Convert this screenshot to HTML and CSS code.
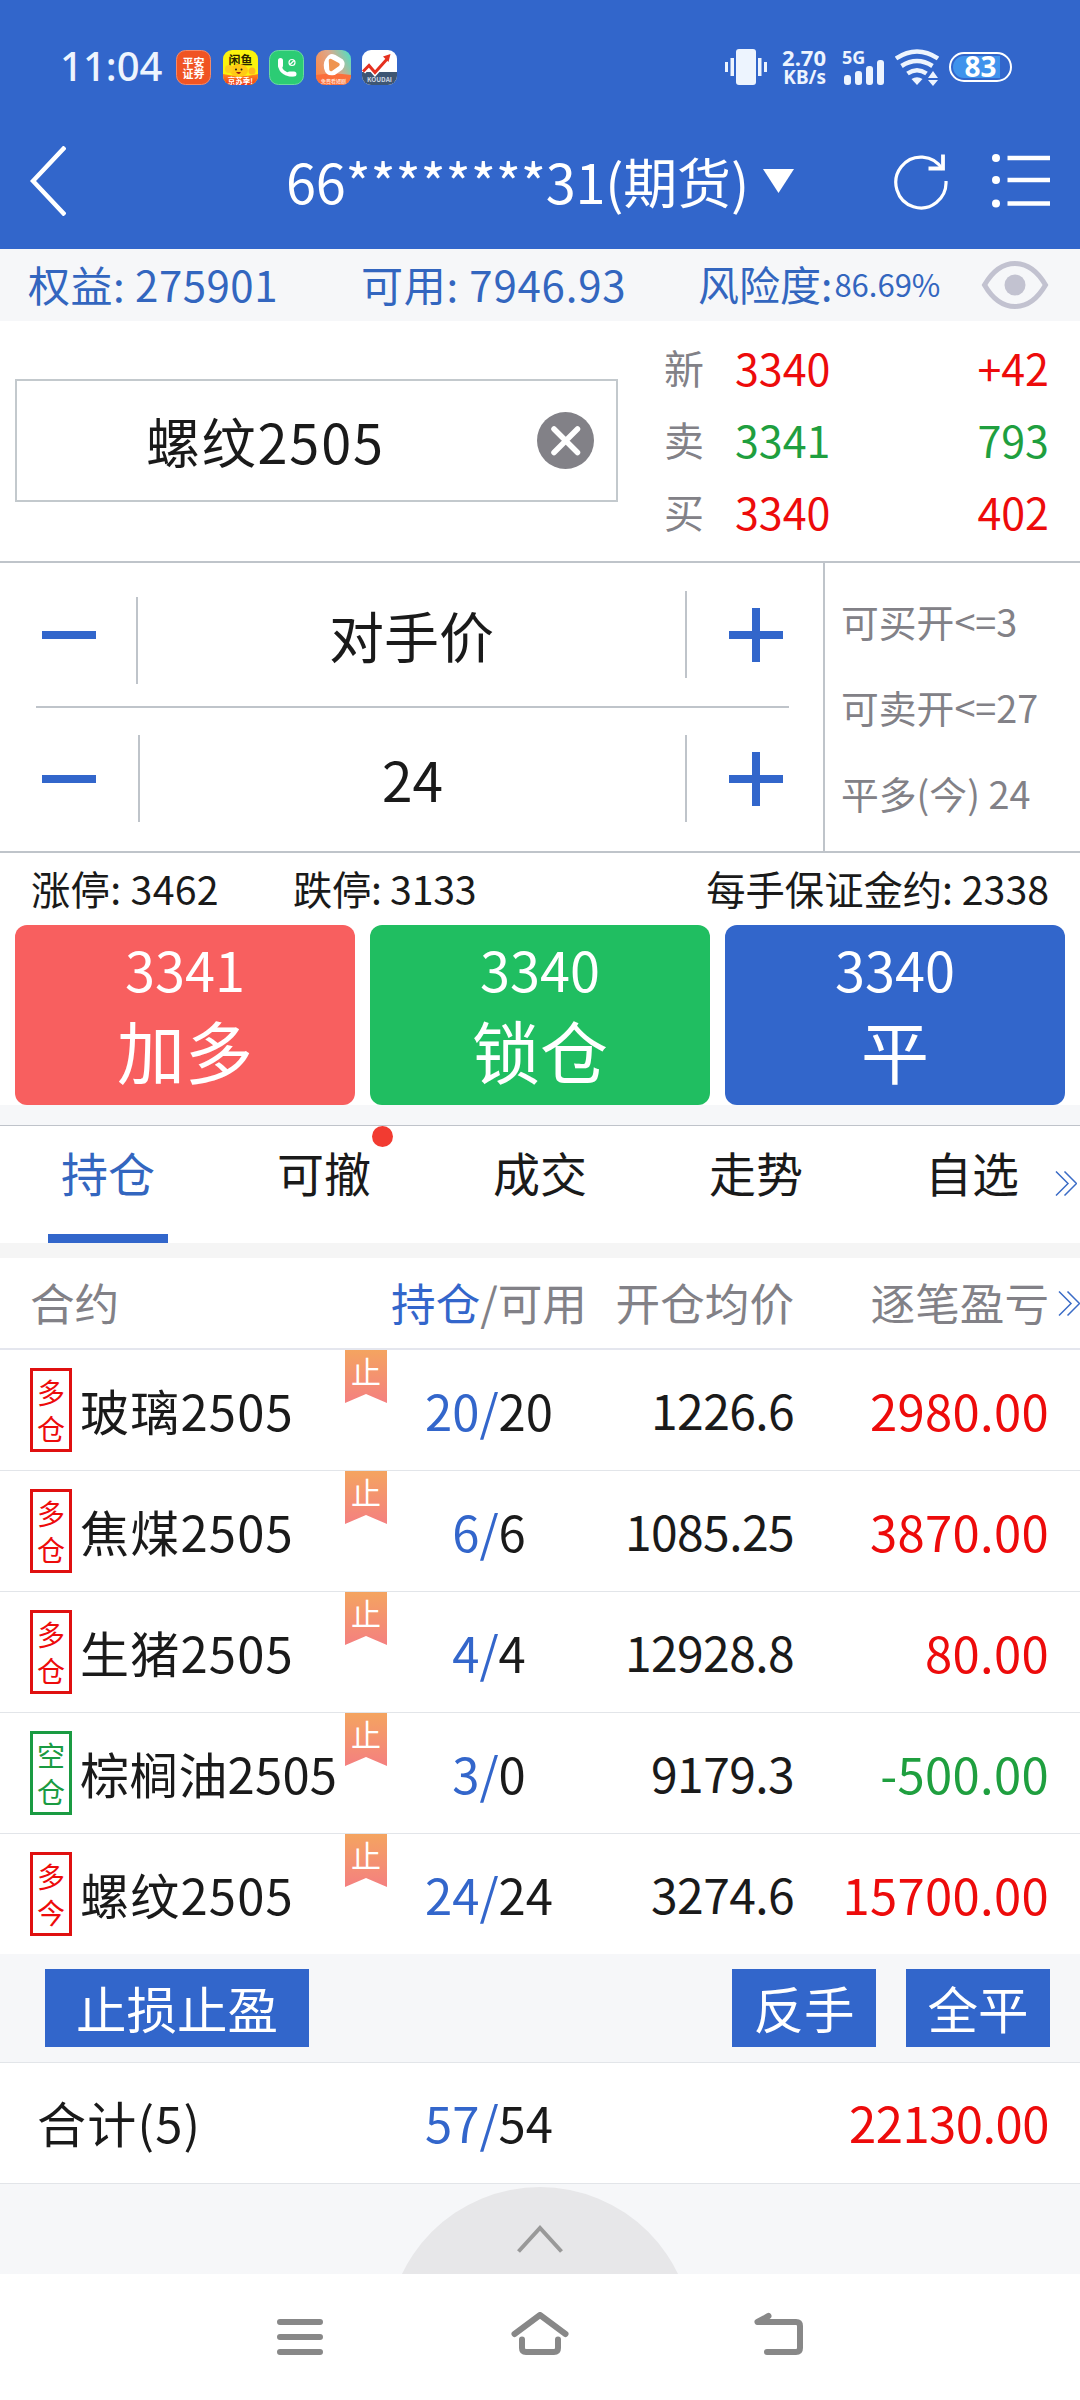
FILE: index.html
```html
<!DOCTYPE html>
<html lang="zh-CN">

<head>
  <meta charset="UTF-8">
  <meta name="viewport" content="width=device-width, initial-scale=1.0">
  <title>期货交易</title>
  <link rel="stylesheet" href="styles.css">
</head>

<body>

  <header class="header">
    <!-- Status bar -->
    <div class="status-bar">
      <span class="time">11:04</span>
      <div class="app-icons">
        <svg width="35" height="35" viewBox="0 0 35 35">
          <rect x=".5" y=".5" width="34" height="34" rx="9" fill="#f05423" stroke="#f48a69" />
          <text x="17.5" y="16.5" class="ico-text" font-size="11">平安</text>
          <text x="17.5" y="27.5" class="ico-text" font-size="11">证券</text>
        </svg>
        <svg width="35" height="35" viewBox="0 0 35 35">
          <defs>
            <clipPath id="round"><rect width="35" height="35" rx="9" /></clipPath>
            <linearGradient id="sale" x1="0" y1="0" x2="0" y2="1">
              <stop offset="0" stop-color="#ff8a1c" />
              <stop offset="1" stop-color="#f0361c" />
            </linearGradient>
          </defs>
          <g clip-path="url(#round)">
            <rect width="35" height="35" fill="#fbf30d" />
            <text x="17.5" y="15" class="ico-text" font-size="12" style="fill:#2a2400">闲鱼</text>
            <path d="M0 24q17 4 35 0v11h-35z" fill="url(#sale)" />
            <ellipse cx="16" cy="20.500" rx="9" ry="6.500" fill="#ffc914" />
            <circle cx="6" cy="19" r="4" fill="#ffcf1d" />
            <circle cx="29" cy="21" r="3.500" fill="#ffb81d" />
            <circle cx="13" cy="19.500" r="1" fill="#222" />
            <circle cx="18.500" cy="19.500" r="1" fill="#222" />
            <path d="M13 22q3 4 5 0z" fill="#9c1f10" />
            <text x="17.500" y="33.500" class="ico-text" font-size="7.500">京苏季!</text>
          </g>
        </svg>
        <svg width="35" height="35" viewBox="0 0 35 35">
          <rect x=".5" y=".5" width="34" height="34" rx="9" fill="#2ccc74" stroke="#6adb9f" />
          <path d="M11 12.500c-1 7.500 4 12.500 13 12" fill="none" stroke="#fff" stroke-width="3.600" stroke-linecap="round" />
          <path d="M11.500 10.500v5M20.500 24h4.500" stroke="#fff" stroke-width="5" stroke-linecap="round" />
          <circle cx="23" cy="12.500" r="3" fill="none" stroke="#fff" stroke-width="1.200" />
          <path d="M21 14.500l4-4" stroke="#fff" stroke-width="1.200" />
        </svg>
        <svg width="35" height="35" viewBox="0 0 35 35">
          <defs>
            <linearGradient id="video" x1="0" y1=".6" x2="1" y2=".1">
              <stop offset="0" stop-color="#f98a4d" />
              <stop offset=".5" stop-color="#dda88a" />
              <stop offset="1" stop-color="#4fe0c4" />
            </linearGradient>
          </defs>
          <rect width="35" height="35" rx="9" fill="url(#video)" />
          <path d="M0 25q17-3 35 0v1a9 9 0 0 1-9 9H9a9 9 0 0 1-9-9z" fill="#fb6f3b" />
          <path d="M12.500 8.500Q14.500 5 18 6.500L25.500 11Q28 14 25 18L18 23Q11.500 24.500 10 18Q9 12 12.500 8.500z" fill="#fff" stroke="#fff" stroke-width="4" stroke-linejoin="round" />
          <path d="M14.500 10.500l7.500 4-7 5z" fill="#ef9450" stroke="#ef9450" stroke-width="3.500" stroke-linejoin="round" />
          <text x="17.500" y="33" class="ico-text" font-size="5" style="fill:#ffd9c4">免费看短剧</text>
        </svg>
        <svg width="35" height="35" viewBox="0 0 35 35">
          <rect width="35" height="35" rx="9" fill="#fff" />
          <path d="M0 22h35v4a9 9 0 0 1-9 9H9a9 9 0 0 1-9-9z" fill="#3e5673" />
          <path d="M1 21.500l6-6 6 7L26 8" fill="none" stroke="#fff" stroke-width="6" />
          <path d="M1 21.500l6-6 6 7L26 8" fill="none" stroke="#e5301f" stroke-width="3" />
          <path d="M21 6.500l7.500-2.500-2 8z" fill="#e5301f" />
          <text x="17.500" y="31.500" class="ico-text" font-size="6.500" style="fill:#cfd8e4">KOUDAI</text>
        </svg>
      </div>

      <div class="status-right">
        <svg class="vibrate" width="42" height="36" viewBox="0 0 42 36" fill="#edf4fe">
          <rect x="11" y="0" width="20" height="36" rx="3" />
          <rect x="5.500" y="9" width="3.500" height="18" />
          <rect x="33" y="9" width="3.500" height="18" />
          <rect x="0" y="13" width="3" height="10" />
          <rect x="39" y="13" width="3" height="10" />
        </svg>
        <div class="speed">
          <div>2.70</div>
          <div class="unit">KB/s</div>
        </div>
        <svg class="signal" width="43" height="37" viewBox="0 0 43 37" fill="#edf4fe">
          <text x="0" y="14.500" class="net">5G</text>
          <rect x="2" y="26" width="7" height="10" rx="3" />
          <rect x="13" y="22" width="7" height="14" rx="3" />
          <rect x="24" y="17" width="7" height="19" rx="3" />
          <rect x="35" y="11" width="7" height="25" rx="3" />
        </svg>
        <svg class="wifi" width="44" height="37" viewBox="0 0 44 37" fill="none" stroke="#edf4fe" stroke-width="4.500">
          <path d="M1 9.500q21-14 42 0" />
          <path d="M6.500 17q15.500-10 31 0" />
          <path d="M12.500 24.500q9.500-6.500 19 0" />
          <path d="M16.500 30q5.500-3.500 11 0l-5.500 6z" fill="#edf4fe" stroke="none" />
          <path d="M33 29l5-7 5 7zM33 31l5 6 5-6z" fill="#edf4fe" stroke="none" />
        </svg>
        <div class="battery"><span class="battery-level"></span><b>83</b></div>
      </div>
    </div>

    <!-- Account title -->
    <div class="title-bar">
      <svg class="back" width="36" height="70" viewBox="0 0 36 70" fill="none" stroke="#fff" stroke-width="4.500">
        <path d="M35 1L3 35l32 34" />
      </svg>
      <div class="title">66********31(期货)</div>
      <svg class="caret" width="31" height="24" viewBox="0 0 31 24" fill="#fff">
        <path d="M0 0h31L15.500 24z" />
      </svg>
      <svg class="refresh" width="56" height="60" viewBox="0 0 56 60" fill="none" stroke="#fff" stroke-width="3.200">
        <path d="M48.500 18.500A25.100 25.400 0 1 0 52 30" />
        <path d="M49 3.500v14H34.500" stroke-width="3.800" />
      </svg>
      <svg class="list" width="58" height="54" viewBox="0 0 58 54" fill="#fff">
        <circle cx="4" cy="4" r="4" />
        <circle cx="4" cy="26" r="4" />
        <circle cx="4" cy="49.500" r="4" />
        <path d="M15.500 4H58M15.500 26H58M15.500 49.500H58" stroke="#fff" stroke-width="4.500" />
      </svg>
    </div>
  </header>

  <section class="account">
    <span class="equity">权益: 275901</span>
    <span class="available">可用: 7946.93</span>
    <span class="risk">风险度:</span>
    <span class="risk-value">86.69%</span>
    <svg class="eye" width="68" height="50" viewBox="0 0 68 50" fill="none" stroke="#c2c2d0" stroke-width="5">
      <path d="M3.500 25Q16 3.500 34 3.500T64.500 25Q52 46.500 34 46.500T3.500 25z" />
      <circle cx="34" cy="25" r="10.500" fill="#c2c2d0" stroke="none" />
    </svg>
  </section>

  <!-- Contract and quotes -->
  <section class="quote">
    <div class="contract-box">
      <span class="contract-name">螺纹2505</span>
      <svg class="clear" width="57" height="57" viewBox="0 0 57 57">
        <circle cx="28.500" cy="28.500" r="28.500" fill="#828187" />
        <path d="M17 17l23.500 23.500M40.500 17L17 40.500" stroke="#fff" stroke-width="5.500" stroke-linecap="round" />
      </svg>
    </div>
    <div class="prices">
      <div class="price-row"><span class="label">新</span><span class="red">3340</span><span class="vol red">+42</span></div>
      <div class="price-row"><span class="label">卖</span><span class="green">3341</span><span class="vol green">793</span></div>
      <div class="price-row"><span class="label">买</span><span class="red">3340</span><span class="vol red">402</span></div>
    </div>
  </section>

  <!-- Price and volume -->
  <section class="order">
    <div class="steppers">
      <div class="stepper first">
        <span class="minus"></span>
        <span class="value">对手价</span>
        <span class="plus"></span>
      </div>
      <div class="stepper">
        <span class="minus"></span>
        <span class="value">24</span>
        <span class="plus"></span>
      </div>
    </div>
    <div class="order-info">
      <div>可买开&lt;=3</div>
      <div>可卖开&lt;=27</div>
      <div>平多(今) 24</div>
    </div>
  </section>

  <section class="limits">
    <span class="limit-up">涨停: 3462</span>
    <span class="limit-down">跌停: 3133</span>
    <span class="margin">每手保证金约: 2338</span>
  </section>

  <section class="trade-buttons">
    <div class="trade buy"><span class="trade-price">3341</span><span class="trade-label">加多</span></div>
    <div class="trade sell"><span class="trade-price">3340</span><span class="trade-label">锁仓</span></div>
    <div class="trade close"><span class="trade-price">3340</span><span class="trade-label">平</span></div>
  </section>

  <nav class="tabs">
    <div class="tab active">持仓</div>
    <div class="tab">可撤<span class="dot"></span></div>
    <div class="tab">成交</div>
    <div class="tab">走势</div>
    <div class="tab">自选</div>
    <svg class="more" width="22" height="25" viewBox="0 0 22 25" fill="none" stroke="#3b6cc6" stroke-width="1.500">
      <path d="M1 .5l12 12-12 12M9.500 .5l12 12-12 12" />
    </svg>
  </nav>

  <!-- Positions -->
  <section class="positions">
    <div class="row head">
      <span class="name">合约</span>
      <span class="qty"><i>持仓</i>/可用</span>
      <span class="avg">开仓均价</span>
      <span class="profit">逐笔盈亏</span>
      <svg class="more" width="22" height="25" viewBox="0 0 22 25" fill="none" stroke="#3b6cc6" stroke-width="1.500">
        <path d="M1 .5l12 12-12 12M9.500 .5l12 12-12 12" />
      </svg>
    </div>
    <div class="row">
      <span class="name"><span class="badge">多<br>仓</span>玻璃2505</span><span class="stop">止</span>
      <span class="qty"><i>20/</i>20</span>
      <span class="avg">1226.6</span>
      <span class="profit red">2980.00</span>
    </div>
    <div class="row">
      <span class="name"><span class="badge">多<br>仓</span>焦煤2505</span><span class="stop">止</span>
      <span class="qty"><i>6/</i>6</span>
      <span class="avg">1085.25</span>
      <span class="profit red">3870.00</span>
    </div>
    <div class="row">
      <span class="name"><span class="badge">多<br>仓</span>生猪2505</span><span class="stop">止</span>
      <span class="qty"><i>4/</i>4</span>
      <span class="avg">12928.8</span>
      <span class="profit red">80.00</span>
    </div>
    <div class="row">
      <span class="name long"><span class="badge short">空<br>仓</span>棕榈油2505</span><span class="stop">止</span>
      <span class="qty"><i>3/</i>0</span>
      <span class="avg">9179.3</span>
      <span class="profit green">-500.00</span>
    </div>
    <div class="row">
      <span class="name"><span class="badge">多<br>今</span>螺纹2505</span><span class="stop">止</span>
      <span class="qty"><i>24/</i>24</span>
      <span class="avg">3274.6</span>
      <span class="profit red">15700.00</span>
    </div>
  </section>

  <section class="actions">
    <span class="btn wide">止损止盈</span>
    <span class="btn">反手</span>
    <span class="btn">全平</span>
  </section>

  <section class="row total">
    <span class="name">合计(5)</span>
    <span class="qty"><i>57/</i>54</span>
    <span class="avg"></span>
    <span class="profit red">22130.00</span>
  </section>

  <section class="drawer">
    <div class="drawer-handle">
      <svg width="46" height="28" viewBox="0 0 46 28" fill="none" stroke="#999" stroke-width="4">
        <path d="M1.500 26.500L23 3l21.500 23.500" />
      </svg>
    </div>
  </section>

  <!-- System navigation -->
  <footer class="system-nav">
    <svg width="60" height="44" viewBox="0 0 60 44">
      <path d="M10 10h40M10 25h40M10 40h40" />
    </svg>
    <svg width="60" height="44" viewBox="0 0 60 44">
      <path d="M4.500 22L30 3l25.500 19" />
      <path d="M12 27.500v8.500q0 4 4 4h28q4 0 4-4v-8.500" />
    </svg>
    <svg width="60" height="44" viewBox="0 0 60 44">
      <path d="M18.500 4L7.500 10H46q4 0 4 4v22q0 4-4 4H17" />
    </svg>
  </footer>

</body>

</html>
```
FILE: styles.css
```css
* {
  box-sizing: border-box;
}

body {
  margin: 0;
  width: 1080px;
  height: 2400px;
  overflow: hidden;
  background-color: #fff;
  color: #1a1a1a;
  font-family: "Noto Sans CJK SC", sans-serif;
  line-height: 1;
  white-space: nowrap;
}

svg {
  display: block;
  flex-shrink: 0;
}

i {
  font-style: normal;
  color: #3366cb;
}

.red {
  color: #ed0b0b;
}

.green {
  color: #1f9f3f;
}

/* Header */
.header {
  height: 249px;
  background-color: #3266cb;
  color: #fff;
}

.status-bar {
  display: flex;
  align-items: center;
  height: 112px;
  padding: 22px 68px 0 60px;
}

.time {
  width: 116px;
  padding-bottom: 3px;
  font-family: "Noto Sans", sans-serif;
  font-size: 40px;
  font-weight: 500;
  color: #edf4fe;
  line-height: 36px;
}

.app-icons {
  display: flex;
  gap: 11.6px;
}

.ico-text {
  fill: #fff;
  font-weight: bold;
  text-anchor: middle;
}

.status-right {
  display: flex;
  align-items: center;
  margin-left: auto;
}

.speed {
  width: 48px;
  margin-left: 11px;
  font-family: "Noto Sans", sans-serif;
  font-size: 22px;
  font-weight: bold;
  line-height: 20px;
  text-align: right;
  color: #edf4fe;
}

.unit {
  font-size: 19px;
}

.signal {
  margin-left: 16px;
  overflow: visible;
}

.net {
  font-family: "Noto Sans", sans-serif;
  font-size: 18px;
  font-weight: bold;
}

.wifi {
  margin-left: 10px;
}

.battery {
  position: relative;
  width: 63px;
  height: 30px;
  margin-left: 10px;
  border: 2px solid #fff;
  border-radius: 15px;
  text-align: center;
  line-height: 25px;
}

.battery-level {
  position: absolute;
  left: 2px;
  top: 2px;
  width: 47px;
  height: 22px;
  border-radius: 11px 0 0 11px;
  background-color: #3f93ec;
}

.battery b {
  position: relative;
  font-family: "Noto Sans", sans-serif;
  font-size: 28px;
}

.title-bar {
  display: flex;
  align-items: center;
  height: 137px;
  padding: 0 30px;
}

.title {
  width: 469px;
  margin-left: 220px;
  font-size: 54px;
  letter-spacing: -0.2px;
}

.caret {
  margin-left: 8px;
}

.refresh {
  margin-left: 100px;
}

.list {
  margin-left: auto;
}

/* Account summary */
.account {
  display: flex;
  align-items: center;
  height: 72px;
  padding: 0 31px 3px 28px;
  background-color: #f6f7f9;
  color: #3366bf;
  font-size: 42px;
}

.equity {
  width: 333px;
  letter-spacing: 0.5px;
}

.available {
  width: 337px;
  letter-spacing: 0.8px;
}

.risk {
  font-size: 41px;
}

.risk-value {
  margin-left: 2px;
  font-size: 31px;
}

.eye {
  margin: 3px 0 0 auto;
}

/* Contract and quotes */
.quote {
  display: flex;
  height: 242px;
  border-bottom: 2px solid #bfc4ca;
}

.contract-box {
  display: flex;
  align-items: center;
  width: 603px;
  height: 123px;
  margin: 58px 0 0 15px;
  border: 2px solid #c3c9cd;
}

.contract-name {
  width: 520px;
  padding-left: 129px;
  font-size: 54px;
  letter-spacing: 1.8px;
}

.prices {
  flex: 1;
  padding: 10px 31px 0 46px;
}

.price-row {
  display: flex;
  align-items: center;
  height: 72px;
  font-size: 43px;
}

.label {
  width: 71px;
  font-size: 40px;
  color: #828187;
}

.vol {
  margin-left: auto;
}

/* Price and volume steppers */
.order {
  display: flex;
  height: 290px;
  border-bottom: 2px solid #bfc4ca;
}

.steppers {
  width: 825px;
  padding: 0 34px 0 36px;
  border-right: 2px solid #bfc4ca;
}

.stepper {
  display: flex;
  align-items: center;
  height: 141px;
  padding: 0 6px;
}

.stepper.first {
  height: 145px;
  border-bottom: 2px solid #bfc4ca;
}

.minus,
.plus {
  width: 54px;
  height: 54px;
  background: linear-gradient(#3266cb, #3266cb) center / 54px 8px no-repeat;
}

.plus {
  background: linear-gradient(#3266cb, #3266cb) center / 54px 8px no-repeat,
    linear-gradient(#3266cb, #3266cb) center / 8px 54px no-repeat;
}

.value {
  width: 549px;
  height: 87px;
  margin: 0 42px;
  border: solid #bfc4ca;
  border-width: 0 2px;
  font-size: 55px;
  line-height: 86px;
  text-align: center;
}

/* the left separator sits a little lower than the right one */
.first .value {
  width: 551px;
  height: 93px;
  margin: 6px 42px 0 40px;
  border: none;
  background: linear-gradient(#bfc4ca, #bfc4ca) left bottom / 2px 87px no-repeat,
    linear-gradient(#bfc4ca, #bfc4ca) right top / 2px 87px no-repeat;
}

.order-info {
  display: flex;
  flex-direction: column;
  padding: 15px 0 0 16px;
  font-size: 37.8px;
  line-height: 86px;
  color: #828187;
}

.limits {
  display: flex;
  align-items: center;
  height: 72px;
  padding: 0 31px 2px;
  font-size: 39.3px;
}

.limit-up {
  width: 262px;
  letter-spacing: 0.3px;
}

.limit-down {
  letter-spacing: -0.3px;
}

.margin {
  margin-left: auto;
}

/* Trade buttons */
.trade-buttons {
  display: flex;
  gap: 15px;
  height: 180px;
  padding: 0 15px;
}

.trade {
  display: flex;
  flex: 1;
  flex-direction: column;
  align-items: center;
  padding-top: 7px;
  border-radius: 12px;
  color: #fff;
}

.trade-price {
  font-size: 54px;
  line-height: 73px;
}

.trade-label {
  font-size: 68px;
  line-height: 90px;
}

.buy {
  background-color: #f85f5f;
}

.sell {
  background-color: #20be61;
}

.close {
  background-color: #3266cb;
}

/* Tabs */
.tabs {
  position: relative;
  display: flex;
  height: 153px;
  border-top: 20px solid #f6f7f9;
  border-bottom: 15px solid #f5f5f5;
  box-shadow: inset 0 1px #bfc3ca;
}

.tab {
  position: relative;
  width: 216px;
  font-size: 47px;
  line-height: 93px;
  text-align: center;
}

.tab.active {
  color: #3366bf;
}

.tab.active::after {
  content: "";
  display: block;
  width: 120px;
  height: 9px;
  margin: 16px auto 0;
  background-color: #3266cb;
}

.dot {
  position: absolute;
  top: 1px;
  right: 39px;
  width: 21px;
  height: 21px;
  border-radius: 50%;
  background-color: #f23b31;
}

.more {
  position: absolute;
  right: 3px;
  top: 46px;
}

/* Positions table */
.row {
  position: relative;
  display: flex;
  align-items: center;
  height: 121px;
  padding: 0 31px 2px 30px;
  border-bottom: 1px solid #e2e5e9;
  font-size: 49px;
}

.positions .row:last-child {
  height: 120px;
  border-bottom: none;
}

.row.head {
  height: 92px;
  border-bottom: 2px solid #e4e6ee;
  font-size: 44.6px;
  color: #828187;
}

.head .more {
  right: 0;
  top: 33px;
}

.name {
  display: flex;
  align-items: center;
  gap: 8px;
  width: 350px;
  letter-spacing: 1.2px;
}

.name.long {
  letter-spacing: 0.2px;
}

.badge {
  width: 42px;
  height: 84px;
  margin-top: 2px;
  padding-top: 3px;
  border: 3px solid #e01010;
  color: #ed0b0b;
  font-size: 28px;
  line-height: 36px;
  letter-spacing: 0;
  text-align: center;
}

.badge.short {
  border-color: #1a9b42;
  color: #1a9b42;
}

.stop {
  position: absolute;
  left: 345px;
  top: 0;
  width: 42px;
  height: 53px;
  background: linear-gradient(#f4a460, #f48080);
  clip-path: polygon(0 0, 100% 0, 100% 100%, 50% 83%, 0 100%);
  color: #fff;
  font-size: 30px;
  line-height: 40px;
  text-align: center;
}

.qty {
  width: 218px;
  text-align: center;
}

.avg {
  width: 196px;
  font-size: 48px;
  letter-spacing: -0.6px;
  text-align: right;
}

.head .name,
.head .avg,
.head .profit {
  font-size: inherit;
  letter-spacing: 0;
}

.profit {
  flex: 1;
  letter-spacing: 0.3px;
  text-align: right;
}

/* Actions */
.actions {
  display: flex;
  gap: 30px;
  height: 109px;
  padding: 15px 30px 0 45px;
  background-color: #f6f7f9;
  border-bottom: 1px solid #e2e5e9;
}

.btn {
  width: 144px;
  height: 78px;
  background-color: #3266cb;
  color: #fff;
  font-size: 50.5px;
  line-height: 77px;
  text-align: center;
}

.btn.wide {
  width: 264px;
  margin-right: auto;
}

.total {
  padding-bottom: 4px;
}

.total .name {
  padding-left: 7px;
}

.total .profit {
  letter-spacing: -0.5px;
}

.drawer {
  display: flex;
  justify-content: center;
  height: 90px;
  padding-top: 3px;
  background-color: #f6f7f9;
  overflow: hidden;
}

.drawer-handle {
  display: flex;
  justify-content: center;
  flex-shrink: 0;
  width: 306px;
  height: 306px;
  padding-top: 38px;
  border-radius: 50%;
  background-color: #e7e7e9;
}

.system-nav {
  display: flex;
  justify-content: center;
  gap: 180px;
  height: 126px;
  padding-top: 38px;
  fill: none;
  stroke: #888;
  stroke-width: 6;
  stroke-linecap: round;
  stroke-linejoin: round;
}
```
